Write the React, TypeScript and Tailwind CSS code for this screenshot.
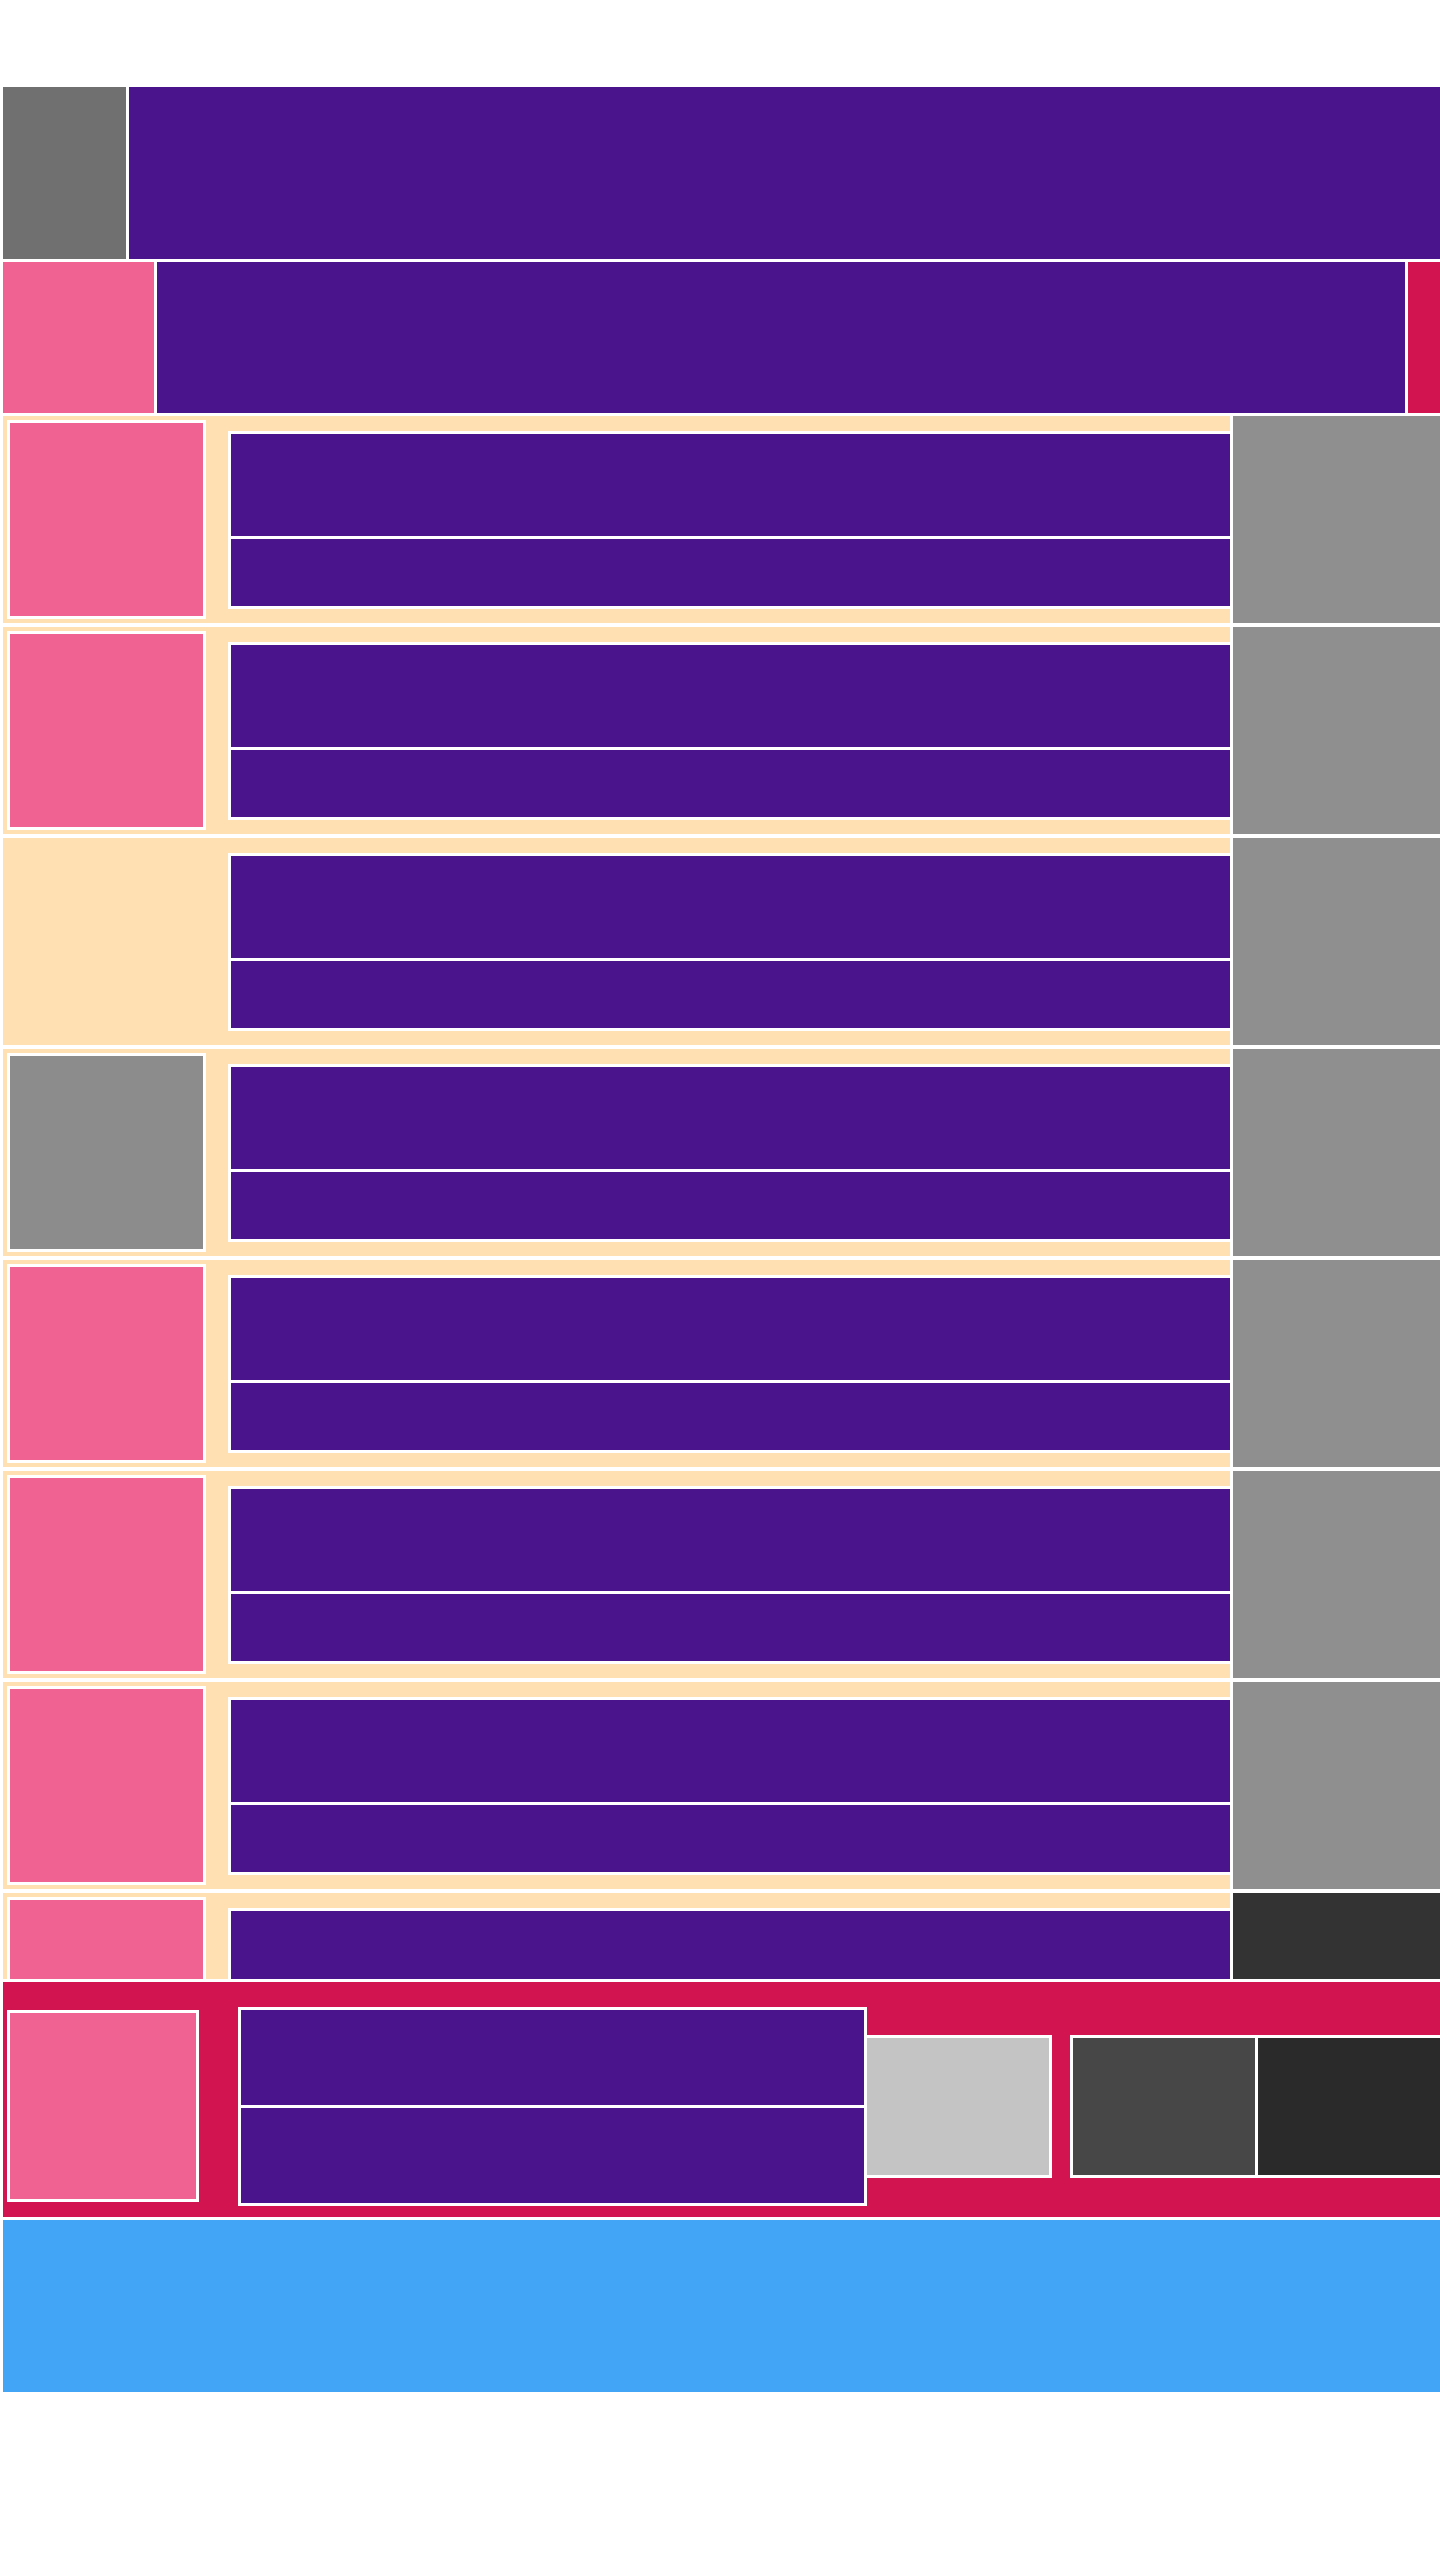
const rows: { img: string | null; side: string }[] = [
  { img: 'bg-[#f06292]', side: 'bg-[#8f8f8f]' },
  { img: 'bg-[#f06292]', side: 'bg-[#8f8f8f]' },
  { img: null, side: 'bg-[#8f8f8f]' },
  { img: 'bg-[#8c8c8c]', side: 'bg-[#8f8f8f]' },
  { img: 'bg-[#f06292]', side: 'bg-[#8f8f8f]' },
  { img: 'bg-[#f06292]', side: 'bg-[#8f8f8f]' },
  { img: 'bg-[#f06292]', side: 'bg-[#8f8f8f]' },
  { img: 'bg-[#f06292]', side: 'bg-[#333333]' },
];

const ListRow = ({ img, side }: { img: string | null; side: string }) => (
  <div className="flex gap-[3px] h-[207px] shrink-0">
    <div className="flex-1 bg-[#ffe0b2] flex items-start pl-[4px] pt-[4px]">
      {img ? (
        <div className={`w-[199px] h-[199px] border-[3px] border-white ${img}`} />
      ) : (
        <div className="w-[199px] h-[199px]" />
      )}
      <div className="ml-[22px] -mr-[3px] mt-[11px] flex-1 border-[3px] border-white bg-white flex flex-col gap-[3px]">
        <div className="h-[102px] bg-[#4a148c]" />
        <div className="h-[67px] bg-[#4a148c]" />
      </div>
    </div>
    <div className={`w-[207px] ${side}`} />
  </div>
);

export default function App() {
  return (
    <div className="min-h-[2560px] bg-white pt-[87px] pl-[3px] flex flex-col gap-[3px]">
      {/* header */}
      <div className="flex gap-[3px] h-[172px]">
        <div className="w-[123px] bg-[#707070]" />
        <div className="flex-1 bg-[#4a148c]" />
      </div>

      {/* sub bar */}
      <div className="flex gap-[3px] h-[151px]">
        <div className="w-[151px] bg-[#f06292]" />
        <div className="flex-1 bg-[#4a148c]" />
        <div className="w-[32px] bg-[#d21550]" />
      </div>

      {/* list */}
      <div className="h-[1563px] overflow-hidden flex flex-col gap-[4px]">
        {rows.map((r, i) => (
          <ListRow key={i} img={r.img} side={r.side} />
        ))}
      </div>

      {/* player */}
      <div className="h-[235px] bg-[#d21550] flex items-start pl-[4px] overflow-hidden">
        <div className="mt-[28px] w-[192px] h-[192px] border-[3px] border-white bg-[#f06292]" />
        <div className="ml-[39px] mt-[25px] w-[629px] border-[3px] border-white bg-white flex flex-col gap-[3px]">
          <div className="h-[95px] bg-[#4a148c]" />
          <div className="h-[95px] bg-[#4a148c]" />
        </div>
        <div className="mt-[53px] w-[185px] h-[143px] border-y-[3px] border-r-[3px] border-white bg-[#c4c4c4]" />
        <div className="ml-[18px] mt-[53px] flex-1 h-[143px] border-[3px] border-r-0 border-white bg-white flex gap-[3px]">
          <div className="w-[182px] bg-[#474747]" />
          <div className="flex-1 bg-[#2a2a2a]" />
        </div>
      </div>

      {/* footer */}
      <div className="h-[172px] bg-[#42a5f5]" />
    </div>
  );
}
